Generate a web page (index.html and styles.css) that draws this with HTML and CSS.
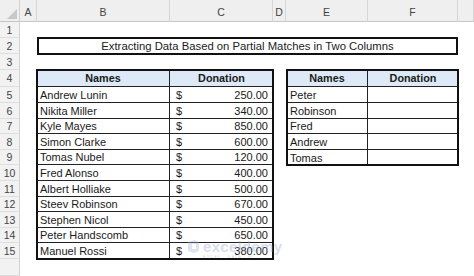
FILE: index.html
```html
<!DOCTYPE html>
<html>
<head>
<meta charset="utf-8">
<link rel="stylesheet" href="styles.css">
</head>
<body>
<div class="sheet">
  <div class="corner"><svg class="tri" width="10" height="10" viewBox="0 0 10 10"><polygon points="10,0 10,10 0,10" fill="#c8c8c8"/></svg></div>
  <div class="colh">A</div>
  <div class="colh">B</div>
  <div class="colh">C</div>
  <div class="colh">D</div>
  <div class="colh">E</div>
  <div class="colh">F</div>
  <div class="colh"></div>

  <div class="rowh">1</div>
  <div class="rowh">2</div>
  <div class="rowh">3</div>
  <div class="rowh">4</div>
  <div class="rowh">5</div>
  <div class="rowh">6</div>
  <div class="rowh">7</div>
  <div class="rowh">8</div>
  <div class="rowh">9</div>
  <div class="rowh">10</div>
  <div class="rowh">11</div>
  <div class="rowh">12</div>
  <div class="rowh">13</div>
  <div class="rowh">14</div>
  <div class="rowh">15</div>
  <div class="rowh"></div>

  <div class="title">Extracting Data Based on Partial Matches in Two Columns</div>

  <div class="tbl tbl-left">
    <div class="th name">Names</div><div class="th">Donation</div>
    <div class="td name">Andrew Lunin</div><div class="td money"><span>$</span><span>250.00</span></div>
    <div class="td name">Nikita Miller</div><div class="td money"><span>$</span><span>340.00</span></div>
    <div class="td name">Kyle Mayes</div><div class="td money"><span>$</span><span>850.00</span></div>
    <div class="td name">Simon Clarke</div><div class="td money"><span>$</span><span>600.00</span></div>
    <div class="td name">Tomas Nubel</div><div class="td money"><span>$</span><span>120.00</span></div>
    <div class="td name">Fred Alonso</div><div class="td money"><span>$</span><span>400.00</span></div>
    <div class="td name">Albert Holliake</div><div class="td money"><span>$</span><span>500.00</span></div>
    <div class="td name">Steev Robinson</div><div class="td money"><span>$</span><span>670.00</span></div>
    <div class="td name">Stephen Nicol</div><div class="td money"><span>$</span><span>450.00</span></div>
    <div class="td name">Peter Handscomb</div><div class="td money"><span>$</span><span>650.00</span></div>
    <div class="td name last">Manuel Rossi</div><div class="td money last"><span>$</span><span>380.00</span></div>
  </div>

  <div class="tbl tbl-right">
    <div class="th name">Names</div><div class="th">Donation</div>
    <div class="td name">Peter</div><div class="td"></div>
    <div class="td name">Robinson</div><div class="td"></div>
    <div class="td name">Fred</div><div class="td"></div>
    <div class="td name">Andrew</div><div class="td"></div>
    <div class="td name last">Tomas</div><div class="td last"></div>
  </div>

  <div class="watermark">
    <svg class="wm-icon" width="15" height="15" viewBox="0 0 15 15"><path d="M2 3 L8 1 L13 3 L13 12 L8 14 L2 12 Z" fill="#9fb3d6"/><path d="M6 5 L10 5 L10 10 L6 10 Z" fill="#ffffff"/></svg>
    <div class="wm-text">
      <span class="wm-name">exceldemy</span>
      <span class="wm-sub">EXCEL · DATA · BI</span>
    </div>
  </div>
</div>
</body>
</html>
```
FILE: styles.css
```css
html, body {
  margin: 0;
  padding: 0;
  background: #ffffff;
}
body {
  font-family: "Liberation Sans", Arial, sans-serif;
  color: #111;
}
.sheet {
  position: relative;
  width: 474px;
  height: 276px;
  overflow: hidden;
  display: grid;
  grid-template-columns: 20px 17px 133px 103px 13px 82px 90px 1fr;
  grid-template-rows: 22px 16px 16px 16px 17px 16px 16px 15px 16px 15px 16px 16px 15px 16px 15px 16px 1fr;
}
.corner {
  grid-row: 1;
  grid-column: 1;
  background: #efefef;
  border-right: 1px solid #d2d2d2;
  border-bottom: 1px solid #c6c6c6;
  display: flex;
  align-items: flex-end;
  justify-content: flex-end;
  padding: 0 2px 2px 0;
}
.colh {
  grid-row: 1;
  background: #efefef;
  border-right: 1px solid #d6d6d6;
  border-bottom: 1px solid #c6c6c6;
  display: flex;
  align-items: center;
  justify-content: center;
  font-size: 10.5px;
  color: #444;
  padding-top: 3px;
}
.rowh {
  grid-column: 1;
  background: #f2f2f2;
  border-right: 1px solid #d2d2d2;
  border-bottom: 1px solid #dedede;
  display: flex;
  align-items: center;
  justify-content: center;
  font-size: 10.5px;
  color: #444;
}
.title {
  grid-column: 3 / 8;
  grid-row: 3;
  margin: -1px 0;
  border: 2px solid #111;
  display: flex;
  align-items: center;
  justify-content: center;
  font-size: 11.3px;
  color: #222;
}
.tbl {
  display: grid;
  outline: 2px solid #111;
  outline-offset: -1px;
}
.tbl-left {
  grid-column: 3 / 5;
  grid-row: 5 / 17;
  grid-template-columns: 133px 103px;
  grid-template-rows: 17px 16px 16px 15px 16px 15px 16px 16px 15px 16px 15px 16px;
}
.tbl-right {
  grid-column: 6 / 8;
  grid-row: 5 / 11;
  margin-left: 1px;
  grid-template-columns: 81px 90px;
  grid-template-rows: 17px 16px 16px 15px 16px 15px;
}
.th, .td {
  border-bottom: 1px solid #222;
  display: flex;
  align-items: center;
  font-size: 11px;
  color: #1a1a1a;
}
.th {
  background: #dde9f6;
  justify-content: center;
  font-weight: bold;
  font-size: 10.8px;
}
.name {
  border-right: 1px solid #222;
}
.td.name {
  padding-left: 3px;
}
.td.last {
  border-bottom: none;
}
.money {
  justify-content: space-between;
  padding: 0 5px 0 6px;
}
.watermark {
  position: absolute;
  left: 186px;
  top: 239px;
  display: flex;
  align-items: flex-start;
  gap: 2px;
  opacity: 0.35;
  pointer-events: none;
}
.wm-text {
  display: flex;
  flex-direction: column;
  line-height: 1;
}
.wm-name {
  font-size: 15px;
  color: #8ea3c9;
  font-weight: bold;
  letter-spacing: 0.3px;
}
.wm-sub {
  font-size: 4px;
  color: #7d8fb0;
  letter-spacing: 1px;
  margin-top: 1px;
}
```
